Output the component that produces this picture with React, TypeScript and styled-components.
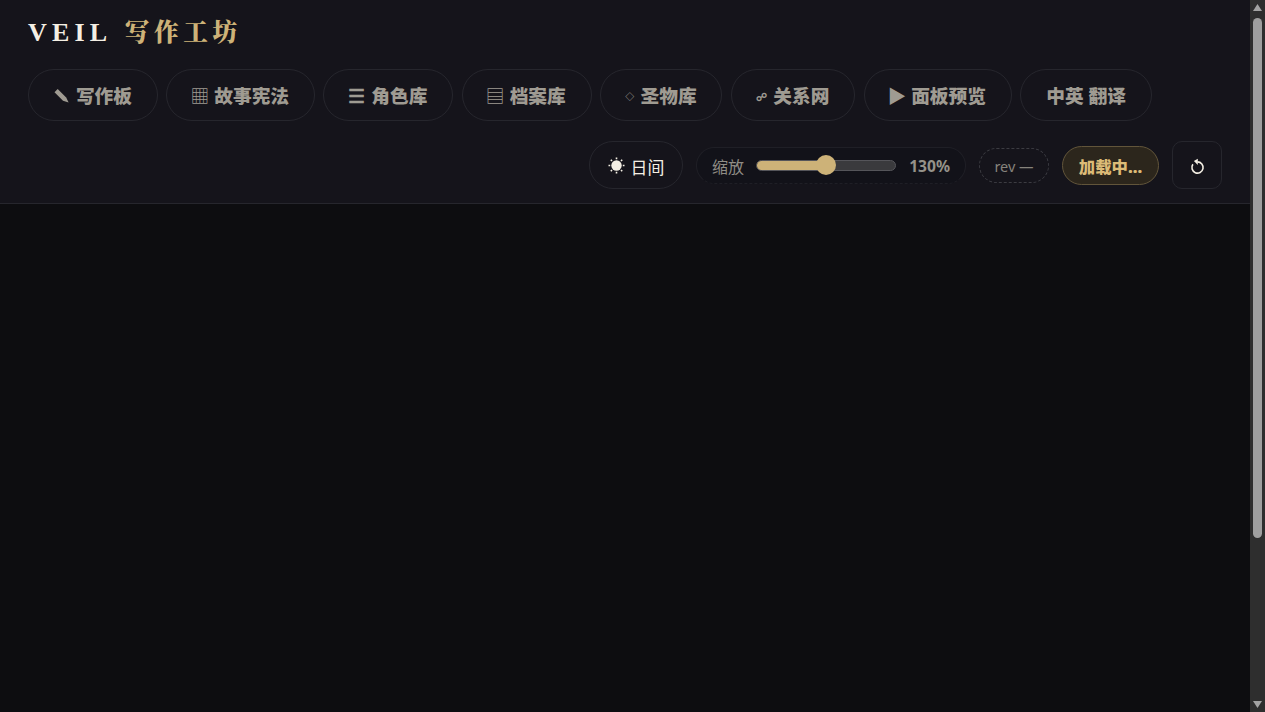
import React from "react";
import styled, { createGlobalStyle } from "styled-components";

const GlobalStyle = createGlobalStyle`
  html,
  body,
  #root {
    height: 100%;
  }

  body {
    margin: 0;
    overflow: hidden;
    background-color: #0d0d10;
    font-family: "Noto Sans", "Noto Sans CJK SC", sans-serif;
  }
`;

const Shell = styled.div`
  display: flex;
  height: 100%;
  background-color: #0d0d10;
`;

const Main = styled.main`
  flex: 1;
  min-width: 0;
`;

const ScrollRail = styled.aside`
  display: flex;
  flex-direction: column;
  align-items: center;
  width: 15px;
  background-color: #2e2e2e;
`;

const RailArrow = styled.svg`
  flex: none;
  width: 15px;
  height: 17px;
  fill: #a3a3a3;
`;

const RailThumb = styled.div`
  width: 9px;
  height: 520px;
  margin-top: 1px;
  background-color: #9f9f9f;
  border-radius: 5px;
`;

const RailSpacer = styled.div`
  flex: 1;
`;

const Header = styled.header`
  box-sizing: border-box;
  height: 204px;
  padding: 16px 28px 0;
  background-color: #15141b;
  border-bottom: 1px solid #26262d;
`;

const Brand = styled.h1`
  margin: 0;
  height: 33px;
  font-family: "Liberation Serif", "Noto Serif CJK SC", serif;
  font-size: 26px;
  line-height: 33px;
  font-weight: 900;
  letter-spacing: 5.2px;
  color: #f4efe4;
`;

const BrandAccent = styled.span`
  margin-left: 2px;
  color: #cdb278;
  font-size: 24.7px;
  letter-spacing: 4.6px;
`;

const Nav = styled.nav`
  display: flex;
  gap: 8.45px;
  margin-top: 20px;
`;

const NavPill = styled.button`
  box-sizing: border-box;
  display: flex;
  align-items: center;
  gap: 7px;
  height: 52px;
  padding: 0 24.9px 2px;
  background: transparent;
  border: 1px solid #26262d;
  border-radius: 26px;
  color: #9f9b92;
  font-family: inherit;
  font-size: 18.72px;
  font-weight: 900;
  white-space: nowrap;
`;

const NavIcon = styled.span<{ $size: number; $width: number; $thin?: boolean }>`
  display: flex;
  justify-content: center;
  width: ${(props) => props.$width}px;
  font-size: ${(props) => props.$size}px;
  font-weight: ${(props) => (props.$thin ? 400 : 800)};
  line-height: 1;
  transform: translateY(2px);
`;

const PencilGlyph = styled.svg`
  width: 15px;
  height: 15px;
  fill: currentColor;
  transform: translateY(1px);
`;

const SunGlyph = styled.svg`
  width: 17px;
  height: 17px;
  fill: currentColor;
  stroke: currentColor;
  stroke-width: 1.6;
  transform: translateY(-1px);
`;

const RefreshGlyph = styled.svg`
  display: block;
  width: 15px;
  height: 17px;
  fill: currentColor;
`;

const Controls = styled.div`
  display: flex;
  align-items: center;
  justify-content: flex-end;
  gap: 13px;
  margin-top: 20px;
`;

const ThemeButton = styled.button`
  box-sizing: border-box;
  display: flex;
  align-items: center;
  justify-content: center;
  gap: 6px;
  width: 94px;
  height: 48px;
  padding: 2px 0 0;
  background: transparent;
  border: 1px solid #26262d;
  border-radius: 24px;
  color: #f4efe4;
  font-family: inherit;
  font-size: 16.9px;
  white-space: nowrap;
`;

const ZoomBox = styled.div`
  box-sizing: border-box;
  display: flex;
  align-items: center;
  width: 270px;
  height: 37px;
  padding: 0 15px;
  border: 1px solid #1f1f26;
  border-bottom-style: dashed;
  border-radius: 19px;
  background-color: #121219;
`;

const ZoomLabel = styled.span`
  width: 44px;
  margin-top: 1px;
  color: #8f8c85;
  font-size: 16px;
`;

const Track = styled.div`
  position: relative;
  width: 140px;
  height: 11px;
  background-color: #3a3a3d;
  border: 1px solid #55555a;
  box-sizing: border-box;
  border-radius: 6px;
`;

const TrackFill = styled.div`
  height: 100%;
  background-color: #cdb278;
  border-radius: 6px;
`;

const Thumb = styled.div`
  position: absolute;
  top: 50%;
  width: 20px;
  height: 20px;
  margin: -10px 0 0 -10px;
  background-color: #cdb278;
  border-radius: 50%;
`;

const ZoomValue = styled.span`
  margin: 1px 0 0 auto;
  color: #95928a;
  font-size: 15.6px;
  font-weight: 700;
`;

const RevBadge = styled.div`
  box-sizing: border-box;
  display: flex;
  align-items: center;
  justify-content: center;
  width: 70px;
  height: 35px;
  padding-top: 2px;
  border: 1px dashed #3c3c42;
  border-radius: 18px;
  color: #86837c;
  font-size: 14.5px;
`;

const StatusBadge = styled.div`
  box-sizing: border-box;
  display: flex;
  align-items: center;
  justify-content: center;
  width: 97px;
  height: 39px;
  padding-top: 2px;
  background-color: #2c261c;
  border: 1px solid #62553a;
  border-radius: 20px;
  color: #dcbb77;
  font-size: 16.38px;
  font-weight: 900;
`;

const RefreshButton = styled.button`
  box-sizing: border-box;
  display: flex;
  align-items: center;
  justify-content: center;
  width: 50px;
  height: 48px;
  padding: 2px 0 0;
  background: transparent;
  border: 1px solid #26262d;
  border-radius: 10px;
  color: #f4efe4;
`;

const PencilIcon = () => (
  <PencilGlyph viewBox="0 0 15 15">
    <path d="M0.5 4.2 3.7 1 12.2 9.5 14.6 14.6 9 12.7Z" />
  </PencilGlyph>
);

const SunIcon = () => (
  <SunGlyph viewBox="0 0 17 17">
    <circle cx="8.5" cy="8.5" r="5.2" strokeWidth="0" />
    <path d="M8.5 0.5V2.2M8.5 14.8V16.5M0.5 8.5H2.2M14.8 8.5H16.5M2.8 2.8 4 4M13 13 14.2 14.2M2.8 14.2 4 13M13 4 14.2 2.8" />
  </SunGlyph>
);

const RefreshIcon = () => (
  <RefreshGlyph viewBox="0 0 15 17">
    <path d="M2.9 6.3A5.6 5.6 0 1 0 7.5 3.9" fill="none" stroke="currentColor" strokeWidth="1.6" />
    <path d="M7.8 0.8V7L3.9 3Z" />
  </RefreshGlyph>
);

const navItems = [
  { icon: <PencilIcon />, label: "写作板" },
  { icon: <NavIcon $size={18.72} $width={15} $thin>▦</NavIcon>, label: "故事宪法" },
  { icon: <NavIcon $size={18.72} $width={15}>☰</NavIcon>, label: "角色库" },
  { icon: <NavIcon $size={18.72} $width={15} $thin>▤</NavIcon>, label: "档案库" },
  { icon: <NavIcon $size={9} $width={7.5}>◇</NavIcon>, label: "圣物库" },
  { icon: <NavIcon $size={11} $width={9.5}>☍</NavIcon>, label: "关系网" },
  { icon: <NavIcon $size={18.72} $width={14.5}>▶</NavIcon>, label: "面板预览" },
  { icon: null, label: "中英 翻译" },
];

const ZOOM_PERCENT = 50;

const App: React.FC = () => {
  return (
    <Shell>
      <GlobalStyle />
      <Main>
        <Header>
          <Brand>
            VEIL <BrandAccent>写作工坊</BrandAccent>
          </Brand>
          <Nav>
            {navItems.map((item) => (
              <NavPill key={item.label}>
                {item.icon}
                {item.label}
              </NavPill>
            ))}
          </Nav>
          <Controls>
            <ThemeButton>
              <SunIcon />
              日间
            </ThemeButton>
            <ZoomBox>
              <ZoomLabel>缩放</ZoomLabel>
              <Track>
                <TrackFill style={{ width: `${ZOOM_PERCENT}%` }} />
                <Thumb style={{ left: `${ZOOM_PERCENT}%` }} />
              </Track>
              <ZoomValue>130%</ZoomValue>
            </ZoomBox>
            <RevBadge>rev —</RevBadge>
            <StatusBadge>加载中...</StatusBadge>
            <RefreshButton>
              <RefreshIcon />
            </RefreshButton>
          </Controls>
        </Header>
      </Main>
      <ScrollRail>
        <RailArrow viewBox="0 0 15 17">
          <path d="M7.5 4 12 11H3Z" />
        </RailArrow>
        <RailThumb />
        <RailSpacer />
        <RailArrow viewBox="0 0 15 17">
          <path d="M3 6H12L7.5 13Z" />
        </RailArrow>
      </ScrollRail>
    </Shell>
  );
};

export default App;
